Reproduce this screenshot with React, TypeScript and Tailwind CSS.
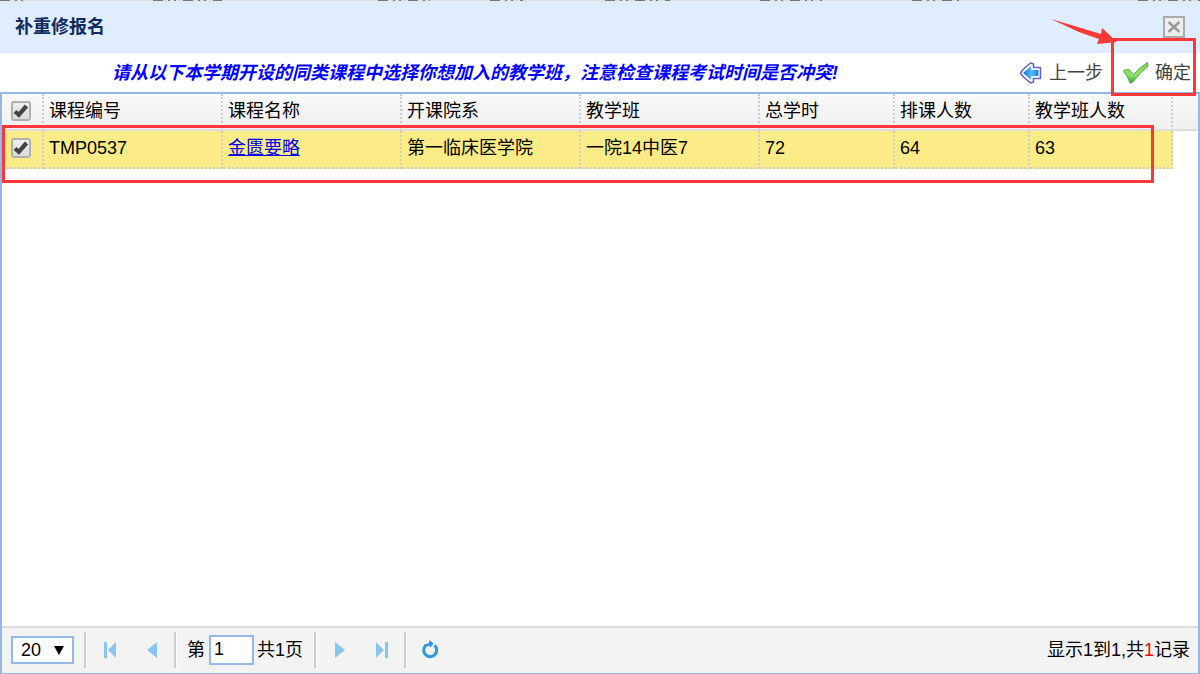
import React, { useState } from "react";

interface Course {
  code: string;
  name: string;
  college: string;
  teachingClass: string;
  hours: number;
  capacity: number;
  enrolled: number;
}

const courses: Course[] = [
  {
    code: "TMP0537",
    name: "金匮要略",
    college: "第一临床医学院",
    teachingClass: "一院14中医7",
    hours: 72,
    capacity: 64,
    enrolled: 63,
  },
];

const headers = [
  { label: "课程编号", width: "w-[179px]" },
  { label: "课程名称", width: "w-[179px]" },
  { label: "开课院系", width: "w-[179px]" },
  { label: "教学班", width: "w-[179px]" },
  { label: "总学时", width: "w-[135px]" },
  { label: "排课人数", width: "w-[135px]" },
  { label: "教学班人数", width: "w-[143px]" },
];

const headClass =
  "border-r-2 border-b-2 border-dotted border-[#ccc] border-b-[#ddd] pb-0.5 text-left font-normal [border-bottom-style:solid]";
const cellClass = "border-r-2 border-b-2 border-dotted border-[#ccc] bg-[#fbec88] pb-0.5";

interface CheckProps {
  label: string;
  checked: boolean;
  onChange: (checked: boolean) => void;
}

const Check = ({ label, checked, onChange }: CheckProps) => (
  <span className="relative ml-[9px] block size-5">
    <input
      type="checkbox"
      aria-label={label}
      checked={checked}
      onChange={(e) => onChange(e.target.checked)}
      className="block size-5 appearance-none rounded-[3px] border-2 border-[#b0b0b0] bg-linear-to-b from-[#eee] to-[#dcdcdc]"
    />
    {checked && (
      <svg viewBox="0 0 20 20" className="pointer-events-none absolute inset-0 size-5">
        <path d="M4 10.5 7.8 13.8 15.5 5" fill="none" stroke="#444" strokeWidth="4.2" />
      </svg>
    )}
  </span>
);

const PagerButton = ({ label, children }: { label: string; children: React.ReactNode }) => (
  <button type="button" aria-label={label} className="flex h-9 w-[42px] items-center justify-center pl-0.5">
    {children}
  </button>
);

const Separator = () => (
  <span className="mx-0.5 h-9 w-0.5 bg-[#ccc] shadow-[1px_0_0_#fff]" />
);

const App = () => {
  const [selected, setSelected] = useState(true);
  const [page, setPage] = useState("1");
  const [pageSize, setPageSize] = useState("20");

  return (
    <div className="flex min-h-screen flex-col bg-white font-['Liberation_Sans','Noto_Sans_CJK_SC',sans-serif] text-lg leading-6 text-black">
      {/* edge of the page behind the dialog */}
      <div className="h-px overflow-hidden bg-[#ddd]">
        <svg width="1200" height="1" className="block">
          <path
            d="M0 .5H30M153 .5H222M378 .5H430M490 .5H523M605 .5H670M760 .5H822M912 .5H960M1138 .5H1200"
            stroke="#777"
            strokeDasharray="10 5 2 4 2 7"
          />
        </svg>
      </div>

      <header className="flex h-[52px] items-center justify-between bg-[#e0ecff] px-[15px]">
        <h1 className="font-bold text-[#0e2d5f]">补重修报名</h1>
        <button
          type="button"
          aria-label="关闭"
          className="flex size-[22px] items-center justify-center border-2 border-[#aaa] bg-[#eee]"
        >
          <svg viewBox="0 0 14 14" className="size-3.5">
            <path d="M1.5 2 12.5 12M12.5 2 1.5 12" stroke="#999" strokeWidth="2.4" />
          </svg>
        </button>
      </header>

      <div className="flex h-[39px] items-center justify-between pr-[9px] pl-28">
        <p className="font-bold text-[#0000ff] italic">
          请从以下本学期开设的同类课程中选择你想加入的教学班，注意检查课程考试时间是否冲突!
        </p>
        <div className="flex items-center gap-5 text-[#444]">
          <button type="button" className="flex items-center gap-1.5">
            <svg viewBox="0 0 24 24" className="size-6">
              <defs>
                <linearGradient id="back" x1="0" x2="1">
                  <stop offset="0" stopColor="#1b6fd0" />
                  <stop offset=".55" stopColor="#4cc0ff" />
                  <stop offset="1" stopColor="#1f7ad8" />
                </linearGradient>
              </defs>
              <path
                d="M1.5 12 4 8.5 11.5 2 14.5 3V6.5H21.5V17.5H14.5V21L11.5 22 4 15.5Z"
                fill="#fff"
                stroke="#6468b4"
                strokeWidth="1.6"
                strokeLinejoin="round"
              />
              <path d="M4 12 12 5V9H19.5V15H12V19Z" fill="url(#back)" />
            </svg>
            上一步
          </button>
          <button type="button" className="relative flex items-center gap-1.5">
            <svg viewBox="0 0 26 24" className="h-6 w-[26px]">
              <defs>
                <linearGradient id="tick" x1="0" y1="0" x2="0" y2="1">
                  <stop offset="0" stopColor="#7ed957" />
                  <stop offset=".6" stopColor="#8fe468" />
                  <stop offset="1" stopColor="#3fa535" />
                </linearGradient>
              </defs>
              <path
                d="M1 9 6 8.5 10.5 13.5Q17 6 24.5 1.5L25 5Q16 12.5 9.5 21.5L7 22Q5 15.5 1 11Z"
                fill="url(#tick)"
                stroke="#55a850"
                strokeLinejoin="round"
              />
            </svg>
            确定
            <span className="pointer-events-none absolute -top-[23px] -right-[5px] -bottom-[11px] -left-3 z-10 border-3 border-[#fa3838]" />
            <svg viewBox="0 0 66 28" className="pointer-events-none absolute -top-11 right-[74px] z-20 h-7 w-[66px]">
              <path d="M0 2 50 17 51 11 66 25 46 27 48 22 28 15Z" fill="#fa3838" />
            </svg>
          </button>
        </div>
      </div>

      <main className="flex flex-1 flex-col border-2 border-b border-[#95b8e7]">
        <div className="relative flex-1">
          <table className="w-full table-fixed border-separate border-spacing-0">
            <thead>
              <tr className="h-[37px] bg-linear-to-b from-[#f9f9f9] to-[#efefef]">
                <th className={`w-[42px] ${headClass}`}>
                  <Check label="全选" checked={selected} onChange={setSelected} />
                </th>
                {headers.map((h) => (
                  <th key={h.label} className={`${h.width} ${headClass} pl-[5px]`}>
                    {h.label}
                  </th>
                ))}
                <th className="border-b-2 border-[#ddd]" />
              </tr>
            </thead>
            <tbody>
              {courses.map((c) => (
                <tr key={c.code} className="h-[38px]">
                  <td className={cellClass}>
                    <Check label={c.code} checked={selected} onChange={setSelected} />
                  </td>
                  <td className={`${cellClass} pl-[5px]`}>{c.code}</td>
                  <td className={`${cellClass} pl-[5px]`}>
                    <a href="#" className="text-[#0000ee] underline">
                      {c.name}
                    </a>
                  </td>
                  <td className={`${cellClass} pl-[5px]`}>{c.college}</td>
                  <td className={`${cellClass} pl-[5px]`}>{c.teachingClass}</td>
                  <td className={`${cellClass} pl-[5px]`}>{c.hours}</td>
                  <td className={`${cellClass} pl-[5px]`}>{c.capacity}</td>
                  <td className={`${cellClass} pl-[5px]`}>{c.enrolled}</td>
                  <td />
                </tr>
              ))}
            </tbody>
          </table>
          {/* highlight around the selected row */}
          <div className="pointer-events-none absolute top-[31px] right-11 left-0 h-[58px] border-3 border-[#fa3838]" />
        </div>

        <footer className="flex h-[47px] items-center justify-between border-t-2 border-[#ddd] bg-[#f3f3f3] pr-2 pb-0.5 pl-[9px]">
          <div className="flex items-center">
            <span className="relative mr-2">
              <select
                aria-label="每页条数"
                value={pageSize}
                onChange={(e) => setPageSize(e.target.value)}
                className="block h-7 w-[63px] appearance-none border-2 border-[#95b8e7] bg-white pl-2"
              >
                <option>20</option>
                <option>50</option>
              </select>
              <svg viewBox="0 0 10 9" className="pointer-events-none absolute top-2.5 right-2.5 h-[9px] w-2.5">
                <path d="M0 0H10L5 9Z" />
              </svg>
            </span>
            <Separator />
            <PagerButton label="首页">
              <svg viewBox="0 0 14 16" className="h-4 w-3.5" fill="#8bc5ef">
                <path d="M1 0H4V16H1ZM13 0V16L5 8Z" />
              </svg>
            </PagerButton>
            <PagerButton label="上一页">
              <svg viewBox="0 0 10 16" className="h-4 w-2.5" fill="#8bc5ef">
                <path d="M10 0V16L0 8Z" />
              </svg>
            </PagerButton>
            <Separator />
            <label className="flex items-center gap-1 pl-[9px]">
              第
              <input
                type="text"
                value={page}
                onChange={(e) => setPage(e.target.value)}
                className="h-[30px] w-[45px] border-2 border-[#95b8e7] bg-white px-[3px]"
              />
            </label>
            <span className="pr-[9px] pl-[3px]">共1页</span>
            <Separator />
            <PagerButton label="下一页">
              <svg viewBox="0 0 10 16" className="h-4 w-2.5" fill="#8bc5ef">
                <path d="M0 0V16L10 8Z" />
              </svg>
            </PagerButton>
            <PagerButton label="末页">
              <svg viewBox="0 0 14 16" className="h-4 w-3.5" fill="#8bc5ef">
                <path d="M13 0H10V16H13ZM1 0V16L9 8Z" />
              </svg>
            </PagerButton>
            <Separator />
            <PagerButton label="刷新">
              <svg viewBox="0 0 18 20" className="h-5 w-[18px]">
                <path d="M13.6 5.4A6.5 6.5 0 1 1 5 5.2" fill="none" stroke="#2f97de" strokeWidth="3" />
                <path d="M8.5 0 12.5 3.5 9.5 7.5 8.5 5.5 4.5 7 3.5 4.5 8 3Z" fill="#2f97de" />
              </svg>
            </PagerButton>
          </div>
          <p>
            显示1到1,共<span className="text-[#ff0000]">1</span>记录
          </p>
        </footer>
      </main>
    </div>
  );
};

export default App;
